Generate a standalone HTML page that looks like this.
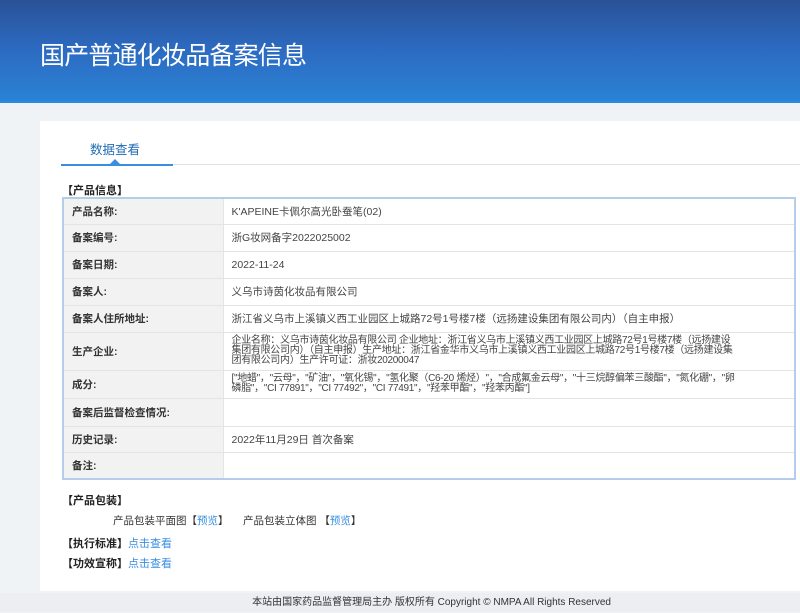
<!DOCTYPE html>
<html><head><meta charset="utf-8"><style>
*{margin:0;padding:0;box-sizing:border-box}
body{width:800px;height:612px;overflow:hidden;background:#f0f3f6;font-family:"Liberation Sans","Noto Sans CJK SC",sans-serif;font-size:11px;color:#333;position:relative}
.hd{position:absolute;left:0;top:0;width:800px;height:103px;background:linear-gradient(180deg,#2a5297 0%,#2c6bc2 50%,#2a82d4 100%);border-bottom:2px solid #2a8ae0}
.hd h1{position:absolute;left:40px;top:36px;font-size:25px;font-weight:normal;color:#fff;letter-spacing:-0.8px}
.panel{position:absolute;left:40px;top:121px;width:760px;height:470px;background:#fff}
.tab{position:absolute;left:50px;top:18px;font-size:12.5px;color:#1f6bb5}
.tabl{position:absolute;left:21px;top:43px;width:739px;height:1px;background:#e2e2e2}
.tabb{position:absolute;left:21px;top:43px;width:112px;height:2px;background:#3a8ee0}
.tri{position:absolute;left:70px;top:38px;width:0;height:0;border-left:5px solid transparent;border-right:5px solid transparent;border-bottom:5px solid #3a8ee0}
.sec{position:absolute;font-weight:bold;color:#222;font-size:11px}
table{position:absolute;left:22px;top:76px;width:734px;border-collapse:collapse;border:2px solid #b4cdec}
td{border-bottom:1px solid #e4e4e4;padding:0 8px;font-size:10.5px;color:#444}
td.l{width:160px;background:#f2f2f2;font-weight:bold;color:#333;border-right:1px solid #e4e4e4}
td.s{font-size:10px;line-height:10px;letter-spacing:-0.3px;padding-right:55px}
a{color:#3a8ee0;text-decoration:none}
.ft{position:absolute;left:0;top:593px;width:800px;height:19px;background:#eceef1;font-size:10px;color:#333;text-align:right;padding-right:189px;line-height:20px}
</style></head><body>
<div class="hd"><h1>国产普通化妆品备案信息</h1></div>
<div class="panel">
<div class="tab">数据查看</div>
<div class="tabl"></div><div class="tabb"></div><div class="tri"></div>
<div class="sec" style="left:22px;top:61px">【产品信息】</div>
<table>
<tr style="height:26px"><td class="l">产品名称:</td><td>K'APEINE卡佩尔高光卧蚕笔(02)</td></tr>
<tr style="height:27px"><td class="l">备案编号:</td><td>浙G妆网备字2022025002</td></tr>
<tr style="height:27px"><td class="l">备案日期:</td><td>2022-11-24</td></tr>
<tr style="height:27px"><td class="l">备案人:</td><td>义乌市诗茵化妆品有限公司</td></tr>
<tr style="height:27px"><td class="l">备案人住所地址:</td><td>浙江省义乌市上溪镇义西工业园区上城路72号1号楼7楼（远扬建设集团有限公司内）（自主申报）</td></tr>
<tr style="height:38px"><td class="l">生产企业:</td><td class="s">企业名称：义乌市诗茵化妆品有限公司 企业地址：浙江省义乌市上溪镇义西工业园区上城路72号1号楼7楼（远扬建设集团有限公司内）（自主申报）生产地址：浙江省金华市义乌市上溪镇义西工业园区上城路72号1号楼7楼（远扬建设集团有限公司内）生产许可证：浙妆20200047</td></tr>
<tr style="height:28px"><td class="l">成分:</td><td class="s">["地蜡"，"云母"，"矿油"，"氧化锡"，"氢化聚（C6-20 烯烃）"，"合成氟金云母"，"十三烷醇偏苯三酸酯"，"氮化硼"，"卵磷脂"，"CI 77891"，"CI 77492"，"CI 77491"，"羟苯甲酯"，"羟苯丙酯"]</td></tr>
<tr style="height:28px"><td class="l">备案后监督检查情况:</td><td></td></tr>
<tr style="height:26px"><td class="l">历史记录:</td><td>2022年11月29日 首次备案</td></tr>
<tr style="height:27px"><td class="l">备注:</td><td></td></tr>
</table>
<div class="sec" style="left:22px;top:371px">【产品包装】</div>
<div style="position:absolute;left:73px;top:392px;font-size:10.5px">产品包装平面图【<a>预览</a>】</div>
<div style="position:absolute;left:203px;top:392px;font-size:10.5px">产品包装立体图 【<a>预览</a>】</div>
<div class="sec" style="left:22px;top:414px">【执行标准】<a style="font-weight:normal">点击查看</a></div>
<div class="sec" style="left:22px;top:434px">【功效宣称】<a style="font-weight:normal">点击查看</a></div>
</div>
<div class="ft">本站由国家药品监督管理局主办 版权所有 Copyright © NMPA All Rights Reserved</div>
</body></html>
